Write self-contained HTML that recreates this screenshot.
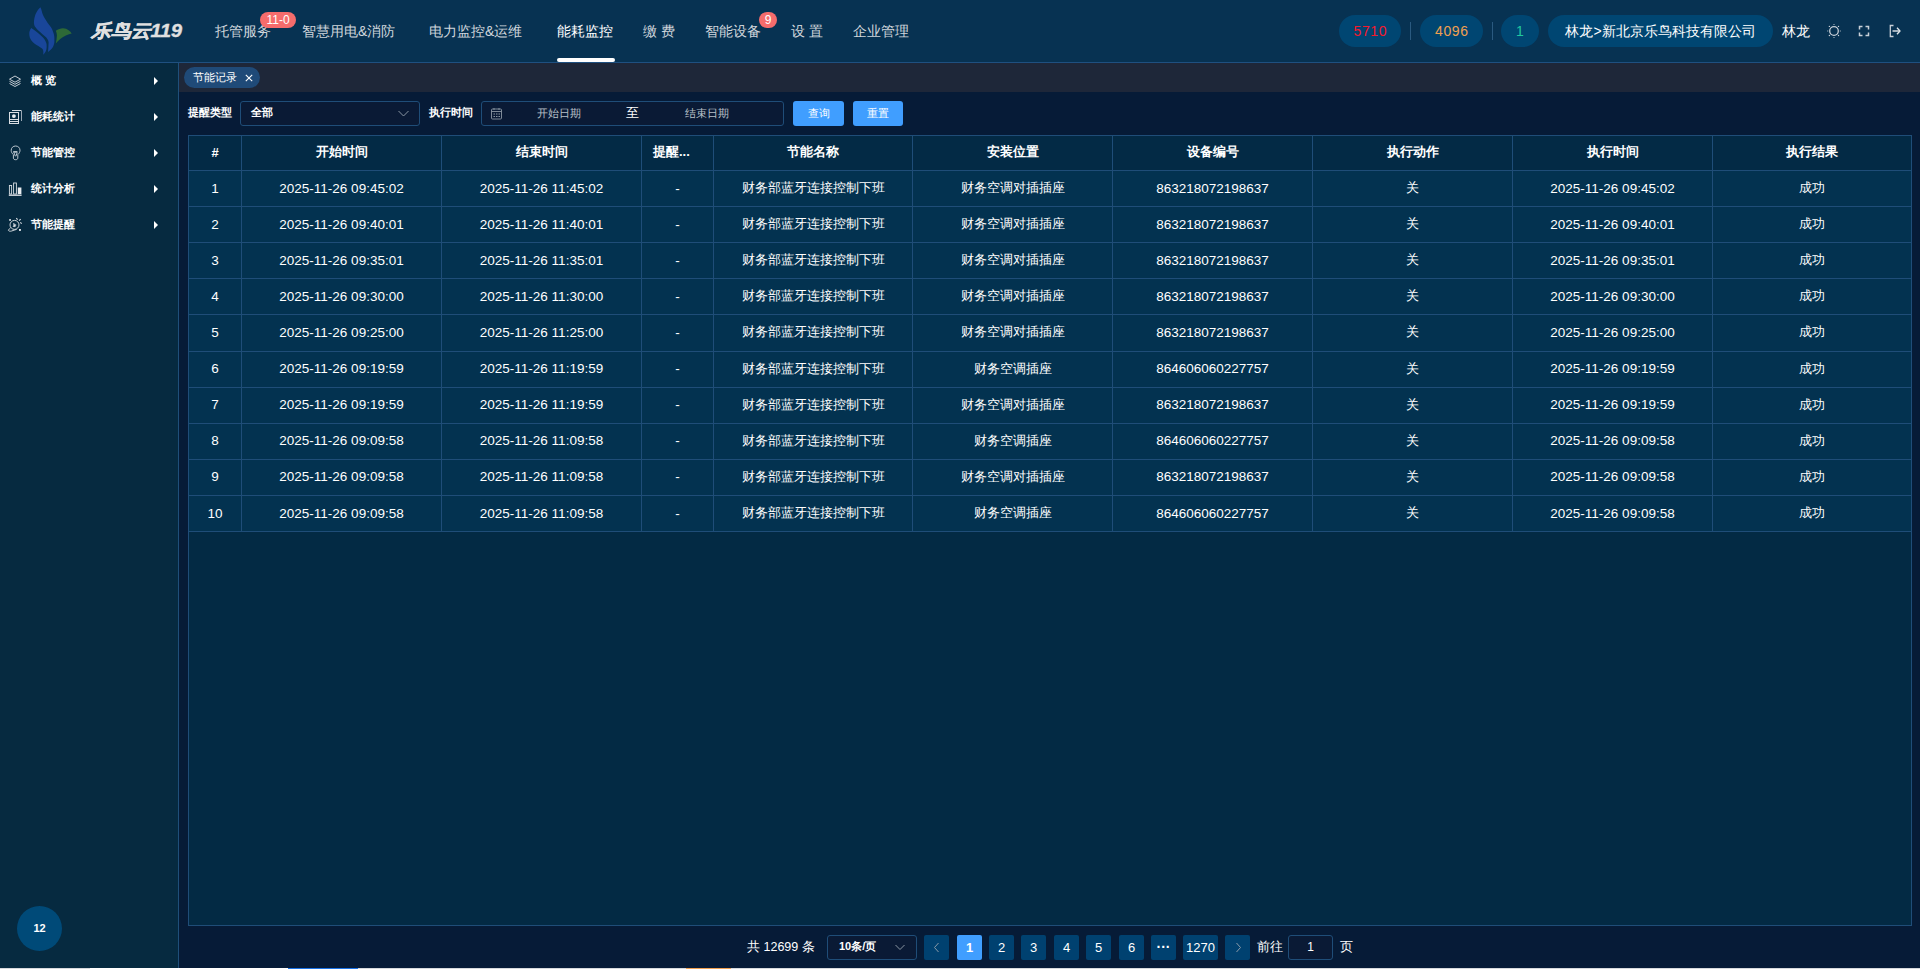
<!DOCTYPE html>
<html><head><meta charset="utf-8">
<style>
*{margin:0;padding:0;box-sizing:border-box}
html,body{width:1920px;height:969px;overflow:hidden;background:#061b37;font-family:"Liberation Sans",sans-serif;color:#fff}
.abs{position:absolute}
#hdr{position:absolute;left:0;top:0;width:1920px;height:63px;background:#073252;border-bottom:1px solid #1f5080}
#side{position:absolute;left:0;top:63px;width:179px;height:906px;background:#062a40;border-right:1px solid #1f4f7a}
#tabs{position:absolute;left:179px;top:63px;width:1741px;height:29px;background:#1e2739}
#content{position:absolute;left:179px;top:92px;width:1741px;height:877px;background:#061b37}
.nav{position:absolute;top:22px;font-size:14px;color:#d0d6dc;white-space:nowrap;line-height:18px}
.badge{position:absolute;height:16px;border-radius:8px;background:#f56c6c;color:#fff;font-size:12px;line-height:16px;text-align:center}
.pill{position:absolute;top:15px;height:32px;border-radius:16px;background:#004672;font-size:14px;line-height:32px;text-align:center}
.sep{position:absolute;top:22px;width:1px;height:18px;background:#2a5a80}
.sitem{position:absolute;left:0;width:178px;height:36px}
.sitem .t{position:absolute;left:31px;top:10px;font-size:11px;font-weight:bold;color:#fff;line-height:14px}
.sitem .ar{position:absolute;left:154px;top:14px;width:0;height:0;border-left:4px solid #fff;border-top:4px solid transparent;border-bottom:4px solid transparent}
.sitem svg{position:absolute;left:8px;top:11px}
table{border-collapse:collapse;table-layout:fixed}
#tbl{position:absolute;left:188px;top:135px;width:1724px;height:791px;background:#032a44;border:1px solid #1f4d78}
#tbl table{position:absolute;left:-1px;top:-1px;width:1724px}
#tbl td,#tbl th{border:1px solid #1f4d78;text-align:center;font-size:13px;color:#fff;white-space:nowrap;overflow:hidden}
#tbl th{height:35px;background:#032a45;font-weight:bold;padding-bottom:2px}
#tbl td{height:36.12px;background:#033250;padding-bottom:1px}
#tbl td.n{font-size:13.5px}
.pg{position:absolute;top:935px;height:25px;width:25px;border-radius:2px;background:#004170;color:#fff;font-size:13px;line-height:25px;text-align:center}
</style></head><body>
<div id="hdr">
  <svg class="abs" style="left:24px;top:4px" width="52" height="54" viewBox="0 0 52 54">
    <path d="M16.4 3.3 C13 6.5 11 10 10 16.7 C9.6 20 10.5 22.3 11.7 23.5 C13.5 26 16.7 28.5 22.3 33.4 C24.2 35.5 25 38 24.5 40.1 C24.4 43 24.2 46 24 47.9 C25.5 47 26.8 46 27.9 44.6 C29.8 42 30.6 39 30.4 36.2 C30.5 33.5 30.2 31 29.5 29 C28.6 26 27.5 24 26.2 22.3 C24.5 20 22.5 17.5 21.2 15 C19.5 12 18.2 9.5 17.8 7.2 C17.4 5.5 16.8 4 16.4 3.3Z" fill="#19469a"/>
    <path d="M7.2 24 C5.8 25.8 5.2 28 5.3 30 C5.4 32.5 6 34.5 7.2 36.2 C9 38.8 11.5 40.5 13.9 41.8 C16 43 18 44.3 19 45.7 C19.5 47.5 19.4 49.3 19.2 50.7 C20.5 49.5 21.8 47.8 22.3 45.7 C22.8 43.5 22.8 41 22.3 39 C21.5 36.8 20.5 35 19 33.4 C17.2 31.5 15 29.8 12.8 27.9 C10.8 26.4 8.8 25 7.2 24Z" fill="#19469a"/>
    <path d="M31.8 26.8 C34 25.2 36.5 24.3 39 24.2 C41.2 24.3 43.2 25.1 44.6 26.2 C46 27.2 47 28.3 47.7 29.5 C46 30 44 30.5 42.4 31.2 C40 32.3 38 33.6 36.2 35.1 C34.5 36.6 33 38.2 31.8 39.6 C32.3 36.8 32.9 34 32.9 31.2 C32.8 29.6 32.4 28 31.8 26.8Z" fill="#2d6937"/>
  </svg>
  <div class="abs" style="left:91px;top:19px;font-size:18px;font-weight:bold;font-style:italic;color:#e0e0e0;line-height:24px;transform-origin:0 0;transform:scaleX(1.1);-webkit-text-stroke:0.4px #e0e0e0">乐鸟云119</div>
  <div class="nav" style="left:215px">托管服务</div>
  <div class="badge" style="left:260px;top:12px;width:36px">11-0</div>
  <div class="nav" style="left:302px">智慧用电&amp;消防</div>
  <div class="nav" style="left:429px">电力监控&amp;运维</div>
  <div class="nav" style="left:557px;color:#fff">能耗监控</div>
  <div class="abs" style="left:557px;top:58px;width:58px;height:4px;border-radius:2px;background:#fff"></div>
  <div class="nav" style="left:643px">缴 费</div>
  <div class="nav" style="left:705px">智能设备</div>
  <div class="badge" style="left:759px;top:12px;width:18px">9</div>
  <div class="nav" style="left:791px">设 置</div>
  <div class="nav" style="left:853px">企业管理</div>

  <div class="pill" style="left:1339px;width:62px;color:#f5192c;letter-spacing:0.6px;text-indent:0.6px">5710</div>
  <div class="sep" style="left:1410px"></div>
  <div class="pill" style="left:1420px;width:63px;color:#f0a050;letter-spacing:0.6px;text-indent:0.6px">4096</div>
  <div class="sep" style="left:1492px"></div>
  <div class="pill" style="left:1501px;width:38px;color:#20c8a0">1</div>
  <div class="pill" style="left:1548px;width:225px;color:#fff">林龙&gt;新北京乐鸟科技有限公司</div>
  <div class="nav" style="left:1782px;color:#fff;top:22px">林龙</div>
  <svg class="abs" style="left:1824px;top:21px" width="20" height="20" viewBox="0 0 20 20" fill="none" stroke="#c8d0d8">
    <circle cx="10" cy="10" r="4.3" stroke-width="1.3"/>
    <path d="M10 3.2v0.9M10 15.9v0.9M3.3 10h0.9M15.8 10h0.9" stroke-width="1.2"/>
    <circle cx="5.4" cy="5.4" r="0.7" fill="#c8d0d8" stroke="none"/><circle cx="14.5" cy="5.4" r="0.7" fill="#c8d0d8" stroke="none"/>
    <circle cx="5.4" cy="14.5" r="0.7" fill="#c8d0d8" stroke="none"/><circle cx="14.5" cy="14.5" r="0.7" fill="#c8d0d8" stroke="none"/>
  </svg>
  <svg class="abs" style="left:1858px;top:25px" width="12" height="12" viewBox="0 0 12 12" fill="none" stroke="#c8d0d8" stroke-width="1.5">
    <path d="M1.5 4.5V1.5H4.5M7.5 1.5H10.5V4.5M10.5 7.5V10.5H7.5M4.5 10.5H1.5V7.5"/>
  </svg>
  <svg class="abs" style="left:1888px;top:24px" width="14" height="14" viewBox="0 0 14 14" fill="none" stroke="#c8d0d8" stroke-width="1.3">
    <path d="M5.5 1.5H2.3V12.5H5.5"/><path d="M4.5 7H11.5" stroke-width="1.6"/><path d="M9 3.8L12 7L9 10.2" stroke="#e0e6ea"/>
  </svg>
</div>

<div id="side">
  <div class="sitem" style="top:0px"><svg style="left:8px;top:12px" width="14" height="13" viewBox="0 0 14 13" fill="none" stroke="#d8dde2" stroke-width="0.9"><path d="M7 1L12.5 4.2L7 7.2L1.5 4.2Z"/><path d="M1.5 6.3L7 9.3L12.5 6.3"/><path d="M1.5 8.5L7 11.5L12.5 8.5"/></svg><div class="t">概 览</div><div class="ar"></div></div>
  <div class="sitem" style="top:36px"><svg style="left:6px;top:8px" width="20" height="20" viewBox="0 0 20 20" fill="none" stroke="#d8dde2" stroke-width="1"><path d="M6 3.5H15.5V14" stroke="#9aa8b4"/><path d="M6 3.5H15" /><rect x="3.5" y="5.5" width="9" height="11"/><circle cx="7.9" cy="9.1" r="1.9" fill="#e8ecef" stroke="none"/><path d="M3.5 12.5H12.5M3.5 14.5H12.5"/></svg><div class="t">能耗统计</div><div class="ar"></div></div>
  <div class="sitem" style="top:72px"><svg style="left:6px;top:8px" width="20" height="20" viewBox="0 0 20 20" fill="none" stroke="#c4ced6" stroke-width="0.95"><path d="M7.4 11.6C5.8 10.4 5.2 8.8 5.2 7.3C5.2 4.8 7.1 3 9.6 3C12.1 3 14 4.8 14 7.3C14 8.8 13.3 10.4 11.8 11.6"/><path d="M7.4 11.6V15C7.4 16.2 8.3 16.7 9.6 16.7C10.9 16.7 11.8 16.2 11.8 15V11.6"/><rect x="7.2" y="8.1" width="4.2" height="1.6" fill="#c4ced6" stroke="none"/><path d="M8 9.7L9.3 13.2M11.2 9.7L9.9 13.2"/></svg><div class="t">节能管控</div><div class="ar"></div></div>
  <div class="sitem" style="top:108px"><svg style="left:8px;top:10px" width="15" height="16" viewBox="0 0 15 16" fill="none" stroke="#d8dde2" stroke-width="0.9"><rect x="1.4" y="4.5" width="2.2" height="8.5"/><rect x="5.6" y="2" width="2.8" height="11"/><rect x="9.8" y="6.5" width="3.6" height="6.5" fill="#e8ecef" stroke="none"/><path d="M0.8 14.2H13.6" stroke-width="1.4"/></svg><div class="t">统计分析</div><div class="ar"></div></div>
  <div class="sitem" style="top:144px"><svg style="left:5px;top:8px" width="20" height="20" viewBox="0 0 20 20" fill="none" stroke="#d8dde2" stroke-width="0.95"><circle cx="9.5" cy="9.9" r="4.5"/><rect x="4.2" y="4.1" width="1.7" height="1.7" fill="#e8ecef" stroke="none"/><rect x="14" y="14" width="1.9" height="1.9" fill="#e8ecef" stroke="none"/><path d="M11.3 3.2L12.6 4.7M14.1 5.7L15.7 4.1M15.3 7.3L16.7 8.7" stroke-width="1.1"/><path d="M5.6 12.8C4.6 13.6 3.6 14.5 3.4 15.3C3.8 16.2 5.2 16.5 6.6 16C8.2 15.5 10 14.8 11.6 14.4"/><path d="M8.6 8.2L9.3 10.3L11.2 9.8M9.3 10.3L8 11.6M9.3 10.3L10.2 12" stroke-width="1.2"/></svg><div class="t">节能提醒</div><div class="ar"></div></div>
  <div class="abs" style="left:17px;top:843px;width:45px;height:45px;border-radius:50%;background:#004a78;color:#fff;font-size:11px;font-weight:bold;line-height:45px;text-align:center">12</div>
</div>

<div id="tabs">
  <div class="abs" style="left:5px;top:4px;width:76px;height:21px;border-radius:11px;background:#1f4a78;color:#fff;font-size:11px;line-height:21px;padding-left:9px">节能记录<svg style="position:absolute;left:61px;top:7px" width="8" height="8" viewBox="0 0 8 8" stroke="#fff" stroke-width="1.1"><path d="M0.8 0.8L7.2 7.2M7.2 0.8L0.8 7.2"/></svg></div>
</div>

<div id="content"></div>

<div class="abs" style="left:188px;top:105px;font-size:11px;font-weight:bold;color:#fff;line-height:14px">提醒类型</div>
<div class="abs" style="left:240px;top:101px;width:180px;height:25px;border:1px solid #1f4d78;border-radius:3px;background:#0a1a35;color:#fff;font-size:11px;font-weight:bold;line-height:20px;padding-left:10px">全部</div>
<svg class="abs" style="left:397px;top:109px" width="13" height="9" viewBox="0 0 13 9" fill="none" stroke="#8a96a3" stroke-width="1"><path d="M1.5 2L6.5 7L11.5 2"/></svg>
<div class="abs" style="left:429px;top:105px;font-size:11px;font-weight:bold;color:#fff;line-height:14px">执行时间</div>
<div class="abs" style="left:481px;top:101px;width:303px;height:25px;border:1px solid #1f4d78;border-radius:3px;background:#0a1a35"></div>
<svg class="abs" style="left:490px;top:107px" width="13" height="13" viewBox="0 0 13 13" fill="none" stroke="#8a96a3" stroke-width="0.9"><rect x="1.5" y="2" width="10" height="10" rx="1"/><path d="M1.5 4.5H11.5M4 1V3M9 1V3"/><path d="M3.5 7H5M6 7H7.5M8.5 7H10M3.5 9.5H5M6 9.5H7.5M8.5 9.5H10" stroke-width="1"/></svg>
<div class="abs" style="left:537px;top:106px;font-size:11px;color:#b8c0c8;line-height:14px">开始日期</div>
<div class="abs" style="left:626px;top:105px;font-size:13px;color:#fff;line-height:16px">至</div>
<div class="abs" style="left:685px;top:106px;font-size:11px;color:#b8c0c8;line-height:14px">结束日期</div>
<div class="abs" style="left:793px;top:101px;width:51px;height:25px;border-radius:3px;background:#409eff;color:#fff;font-size:11px;line-height:25px;text-align:center">查询</div>
<div class="abs" style="left:853px;top:101px;width:50px;height:25px;border-radius:3px;background:#409eff;color:#fff;font-size:11px;line-height:25px;text-align:center">重置</div>

<div id="tbl">
<table>
<colgroup><col style="width:53px"><col style="width:200px"><col style="width:200px"><col style="width:72px"><col style="width:199px"><col style="width:200px"><col style="width:200px"><col style="width:200px"><col style="width:200px"><col style="width:199px"></colgroup>
<tr><th>#</th><th>开始时间</th><th>结束时间</th><th style="text-align:left;padding-left:11px">提醒...</th><th>节能名称</th><th>安装位置</th><th>设备编号</th><th>执行动作</th><th>执行时间</th><th>执行结果</th></tr>
<tr><td class="n">1</td><td class="n">2025-11-26 09:45:02</td><td class="n">2025-11-26 11:45:02</td><td class="n">-</td><td>财务部蓝牙连接控制下班</td><td>财务空调对插插座</td><td class="n">863218072198637</td><td>关</td><td class="n">2025-11-26 09:45:02</td><td>成功</td></tr>
<tr><td class="n">2</td><td class="n">2025-11-26 09:40:01</td><td class="n">2025-11-26 11:40:01</td><td class="n">-</td><td>财务部蓝牙连接控制下班</td><td>财务空调对插插座</td><td class="n">863218072198637</td><td>关</td><td class="n">2025-11-26 09:40:01</td><td>成功</td></tr>
<tr><td class="n">3</td><td class="n">2025-11-26 09:35:01</td><td class="n">2025-11-26 11:35:01</td><td class="n">-</td><td>财务部蓝牙连接控制下班</td><td>财务空调对插插座</td><td class="n">863218072198637</td><td>关</td><td class="n">2025-11-26 09:35:01</td><td>成功</td></tr>
<tr><td class="n">4</td><td class="n">2025-11-26 09:30:00</td><td class="n">2025-11-26 11:30:00</td><td class="n">-</td><td>财务部蓝牙连接控制下班</td><td>财务空调对插插座</td><td class="n">863218072198637</td><td>关</td><td class="n">2025-11-26 09:30:00</td><td>成功</td></tr>
<tr><td class="n">5</td><td class="n">2025-11-26 09:25:00</td><td class="n">2025-11-26 11:25:00</td><td class="n">-</td><td>财务部蓝牙连接控制下班</td><td>财务空调对插插座</td><td class="n">863218072198637</td><td>关</td><td class="n">2025-11-26 09:25:00</td><td>成功</td></tr>
<tr><td class="n">6</td><td class="n">2025-11-26 09:19:59</td><td class="n">2025-11-26 11:19:59</td><td class="n">-</td><td>财务部蓝牙连接控制下班</td><td>财务空调插座</td><td class="n">864606060227757</td><td>关</td><td class="n">2025-11-26 09:19:59</td><td>成功</td></tr>
<tr><td class="n">7</td><td class="n">2025-11-26 09:19:59</td><td class="n">2025-11-26 11:19:59</td><td class="n">-</td><td>财务部蓝牙连接控制下班</td><td>财务空调对插插座</td><td class="n">863218072198637</td><td>关</td><td class="n">2025-11-26 09:19:59</td><td>成功</td></tr>
<tr><td class="n">8</td><td class="n">2025-11-26 09:09:58</td><td class="n">2025-11-26 11:09:58</td><td class="n">-</td><td>财务部蓝牙连接控制下班</td><td>财务空调插座</td><td class="n">864606060227757</td><td>关</td><td class="n">2025-11-26 09:09:58</td><td>成功</td></tr>
<tr><td class="n">9</td><td class="n">2025-11-26 09:09:58</td><td class="n">2025-11-26 11:09:58</td><td class="n">-</td><td>财务部蓝牙连接控制下班</td><td>财务空调对插插座</td><td class="n">863218072198637</td><td>关</td><td class="n">2025-11-26 09:09:58</td><td>成功</td></tr>
<tr><td class="n">10</td><td class="n">2025-11-26 09:09:58</td><td class="n">2025-11-26 11:09:58</td><td class="n">-</td><td>财务部蓝牙连接控制下班</td><td>财务空调插座</td><td class="n">864606060227757</td><td>关</td><td class="n">2025-11-26 09:09:58</td><td>成功</td></tr>
</table>
</div>

<div class="abs" style="left:747px;top:939px;font-size:12.5px;color:#fff;line-height:16px">共 12699 条</div>
<div class="abs" style="left:827px;top:935px;width:90px;height:25px;border:1px solid #1f4d78;border-radius:3px;background:#0a1a35;color:#fff;font-size:11px;font-weight:bold;line-height:20px;padding-left:11px">10条/页</div>

<div class="pg" style="left:924px"></div><div class="pg" style="left:1225px"></div>
<div class="pg" style="left:957px;background:#409eff;font-weight:bold">1</div>
<div class="pg" style="left:989px">2</div>
<div class="pg" style="left:1021px">3</div>
<div class="pg" style="left:1054px">4</div>
<div class="pg" style="left:1086px">5</div>
<div class="pg" style="left:1119px">6</div>
<div class="pg" style="left:1151px;font-weight:bold;font-size:14px;line-height:24px">···</div>
<div class="pg" style="left:1183px;width:35px">1270</div>

<div class="abs" style="left:1257px;top:939px;font-size:13px;color:#fff;line-height:16px">前往</div>
<svg class="abs" style="left:894px;top:943px" width="12" height="9" viewBox="0 0 12 9" fill="none" stroke="#8a96a3" stroke-width="1"><path d="M1.5 2L6 6.5L10.5 2"/></svg>
<div class="abs" style="left:1288px;top:935px;width:45px;height:25px;border:1px solid #1f4d78;border-radius:3px;background:#0a1a35;color:#fff;font-size:12px;line-height:23px;text-align:center">1</div>
<div class="abs" style="left:1340px;top:939px;font-size:13px;color:#fff;line-height:16px">页</div>
<svg class="abs" style="left:932px;top:941px" width="10" height="13" viewBox="0 0 10 13" fill="none" stroke="#8a9aa8" stroke-width="1"><path d="M6.5 2L2.5 6.5L6.5 11"/></svg><svg class="abs" style="left:1233px;top:941px" width="10" height="13" viewBox="0 0 10 13" fill="none" stroke="#8a9aa8" stroke-width="1"><path d="M3.5 2L7.5 6.5L3.5 11"/></svg><div class="abs" style="left:0;top:968px;width:1920px;height:1px;background:#d6d9dd"></div>
<div class="abs" style="left:90px;top:968px;width:198px;height:1px;background:#fff"></div>
<div class="abs" style="left:288px;top:968px;width:70px;height:1px;background:#1a73e8"></div>
<div class="abs" style="left:686px;top:968px;width:45px;height:1px;background:#f0a050"></div>
</body></html>
